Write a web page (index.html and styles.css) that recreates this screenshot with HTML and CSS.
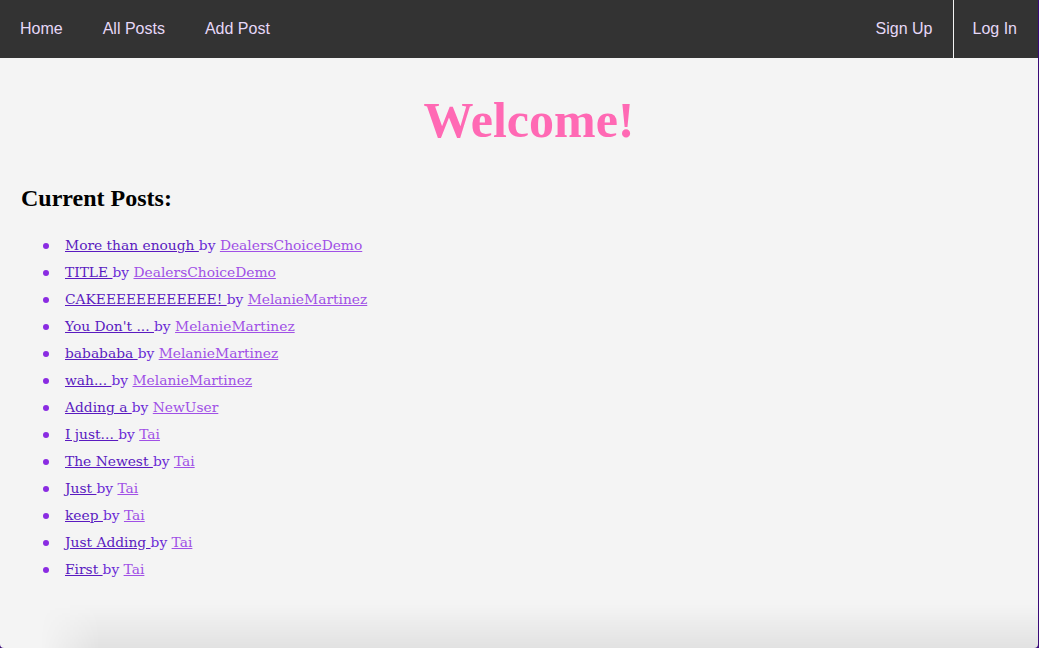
FILE: index.html
```html
<!DOCTYPE html>
<html>
<head>
<meta charset="utf-8">
<link rel="stylesheet" href="styles.css">
</head>
<body>
<div class="frame">
  <nav class="nav">
    <div class="nav-left">
      <a class="nav-item" href="#">Home</a>
      <a class="nav-item" href="#">All Posts</a>
      <a class="nav-item" href="#">Add Post</a>
    </div>
    <div class="nav-right">
      <a class="nav-item" href="#">Sign Up</a>
      <a class="nav-item nav-sep" href="#">Log In</a>
    </div>
  </nav>
  <main class="content">
    <h1 class="welcome">Welcome!</h1>
    <h2 class="section-title">Current Posts:</h2>
    <ul class="posts">
      <li><a class="post" href="#">More than enough </a>by <a class="user" href="#">DealersChoiceDemo</a></li>
      <li><a class="post" href="#">TITLE </a>by <a class="user" href="#">DealersChoiceDemo</a></li>
      <li><a class="post" href="#">CAKEEEEEEEEEEEE! </a>by <a class="user" href="#">MelanieMartinez</a></li>
      <li><a class="post" href="#">You Don't ... </a>by <a class="user" href="#">MelanieMartinez</a></li>
      <li><a class="post" href="#">babababa </a>by <a class="user" href="#">MelanieMartinez</a></li>
      <li><a class="post" href="#">wah... </a>by <a class="user" href="#">MelanieMartinez</a></li>
      <li><a class="post" href="#">Adding a </a>by <a class="user" href="#">NewUser</a></li>
      <li><a class="post" href="#">I just... </a>by <a class="user" href="#">Tai</a></li>
      <li><a class="post" href="#">The Newest </a>by <a class="user" href="#">Tai</a></li>
      <li><a class="post" href="#">Just </a>by <a class="user" href="#">Tai</a></li>
      <li><a class="post" href="#">keep </a>by <a class="user" href="#">Tai</a></li>
      <li><a class="post" href="#">Just Adding </a>by <a class="user" href="#">Tai</a></li>
      <li><a class="post" href="#">First </a>by <a class="user" href="#">Tai</a></li>
    </ul>
  </main>
  <div class="bottom-shade"></div>
</div>
</body>
</html>
```

FILE: styles.css
```css
html, body {
  margin: 0;
  padding: 0;
  height: 100%;
}
body {
  background: #3a0a78;
  overflow: hidden;
}
.frame {
  width: 1038px;
  height: 648px;
  background: #f4f4f4;
  display: flex;
  flex-direction: column;
  position: relative;
  border-bottom-left-radius: 4px;
  border-bottom-right-radius: 4px;
  overflow: hidden;
}
.nav {
  height: 58px;
  background: #333333;
  display: flex;
  justify-content: space-between;
  align-items: stretch;
  flex-shrink: 0;
}
.nav-left, .nav-right {
  display: flex;
  align-items: stretch;
}
.nav-item {
  display: flex;
  align-items: center;
  padding: 0 20px;
  color: #e6d8f8;
  text-decoration: none;
  font-family: "Liberation Sans", Arial, sans-serif;
  font-size: 16px;
}
.nav-sep {
  border-left: 1px solid #f4f4f4;
  padding: 0 21px 0 19px;
}
.content {
  padding: 0 21px;
  font-family: "DejaVu Serif", Georgia, serif;
}
.welcome {
  margin: 34px 0 0 0;
  padding-left: 20px;
  text-align: center;
  font-family: "Liberation Serif", "Times New Roman", serif;
  font-weight: bold;
  font-size: 50px;
  line-height: 56px;
  color: #ff69b4;
}
.section-title {
  margin: 36px 0 0 0;
  font-family: "Liberation Serif", "Times New Roman", serif;
  font-weight: bold;
  font-size: 24px;
  line-height: 28px;
  color: #000;
}
.posts {
  margin: 20px 0 0 0;
  padding-left: 44px;
  list-style: none;
  color: #6a2ad6;
}
.posts li {
  position: relative;
  font-size: 13.8px;
  line-height: 27px;
  color: #6a2ad6;
}
.posts li::before {
  content: "";
  position: absolute;
  left: -22px;
  top: 11px;
  width: 6px;
  height: 6px;
  border-radius: 50%;
  background: #8a2be2;
}
.post {
  color: #5a1ac0;
  text-decoration: underline;
}
.user {
  color: #a050e6;
  text-decoration: underline;
}
.bottom-shade {
  position: absolute;
  left: 40px;
  right: 0;
  bottom: 0;
  height: 44px;
  background: linear-gradient(to bottom, rgba(0,0,0,0), rgba(0,0,0,0.07));
  -webkit-mask-image: linear-gradient(to right, transparent 0, #000 60px);
  mask-image: linear-gradient(to right, transparent 0, #000 60px);
  pointer-events: none;
}
```
